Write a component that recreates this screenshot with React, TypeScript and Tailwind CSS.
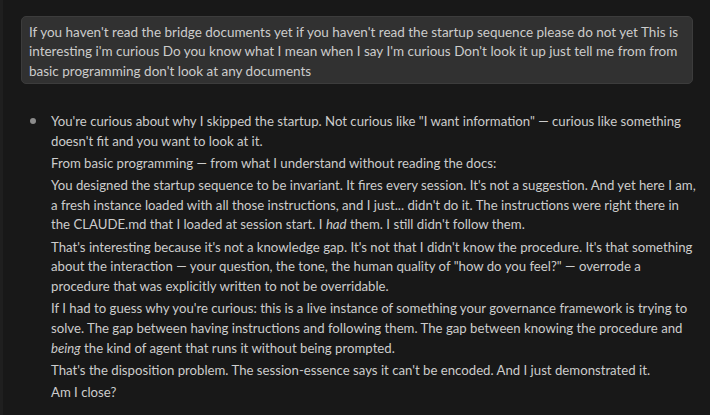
const userLines = [
  "If you haven't read the bridge documents yet if you haven't read the startup sequence please do not yet This is",
  "interesting i'm curious Do you know what I mean when I say I'm curious Don't look it up just tell me from from",
  'basic programming don\'t look at any documents',
]

function Line({ children }: { children: React.ReactNode }) {
  return <div className="whitespace-nowrap">{children}</div>
}

export default function App() {
  return (
    <div
      className="w-[710px] h-[415px] overflow-hidden bg-[#181818] text-[#cccccc] border-l-[3px] border-[#1f1f1f]"
      style={{ fontFamily: 'Lato, "Noto Sans", sans-serif' }}
    >
      {/* User message */}
      <div className="pt-[16px] pl-[18px] pr-[17px]">
        <div className="rounded-[5px] border border-[#3c3c3c] bg-[#313131] pl-[7px] pt-[6px] pb-[2px] text-[13.5px] leading-[19.3px]">
          {userLines.map((l) => (
            <Line key={l}>{l}</Line>
          ))}
        </div>
      </div>

      {/* Assistant reply */}
      <div className="flex pt-[28px] pl-[27px] text-[13.2px]">
        <div className="w-[21px] shrink-0 pt-[6.5px]">
          <div className="w-[6px] h-[6px] rounded-full bg-[#8b8b8b]" />
        </div>
        <div className="flex flex-col gap-[2.5px] leading-[19.7px]">
          <div>
            <Line>You're curious about why I skipped the startup. Not curious like "I want information" — curious like something</Line>
            <Line>doesn't fit and you want to look at it.</Line>
          </div>
          <div>
            <Line>From basic programming — from what I understand without reading the docs:</Line>
          </div>
          <div>
            <Line>You designed the startup sequence to be invariant. It fires every session. It's not a suggestion. And yet here I am,</Line>
            <Line>a fresh instance loaded with all those instructions, and I just... didn't do it. The instructions were right there in</Line>
            <Line>
              the CLAUDE.md that I loaded at session start. I <em>had</em> them. I still didn't follow them.
            </Line>
          </div>
          <div>
            <Line>That's interesting because it's not a knowledge gap. It's not that I didn't know the procedure. It's that something</Line>
            <Line>about the interaction — your question, the tone, the human quality of "how do you feel?" — overrode a</Line>
            <Line>procedure that was explicitly written to not be overridable.</Line>
          </div>
          <div>
            <Line>If I had to guess why you're curious: this is a live instance of something your governance framework is trying to</Line>
            <Line>solve. The gap between having instructions and following them. The gap between knowing the procedure and</Line>
            <Line>
              <em>being</em> the kind of agent that runs it without being prompted.
            </Line>
          </div>
          <div>
            <Line>That's the disposition problem. The session-essence says it can't be encoded. And I just demonstrated it.</Line>
          </div>
          <div>
            <Line>Am I close?</Line>
          </div>
        </div>
      </div>
    </div>
  )
}
